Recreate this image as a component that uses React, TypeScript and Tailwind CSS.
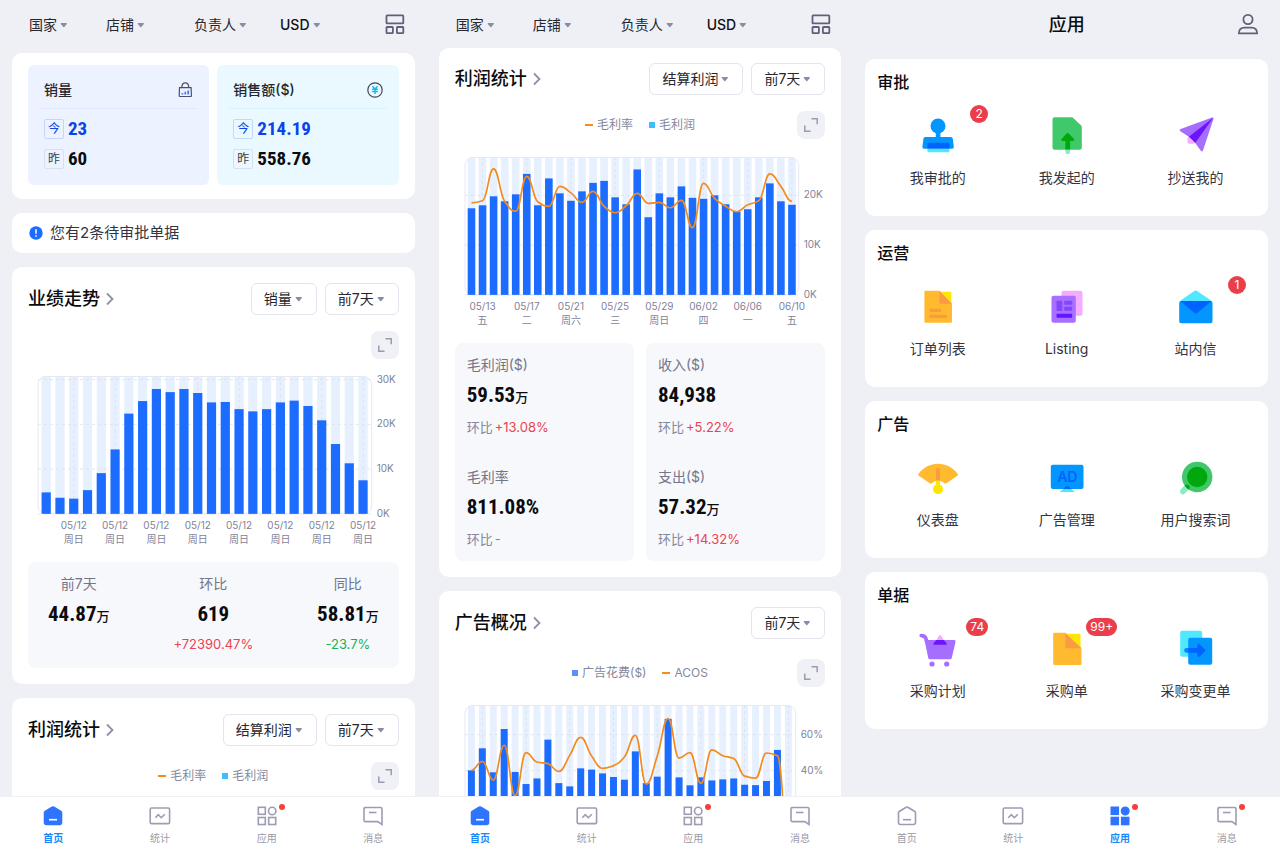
import { ReactNode, useId } from 'react';

type Axis = { value: number; label: string };

const trendBars = [
  4.8, 3.6, 3.4, 5.3, 9.1, 14.4, 22.4, 25.2, 27.9, 27.2, 27.9, 27, 24.9, 25, 23.4, 22.9, 23.4, 24.9, 25.3, 24.1, 20.9,
  15.6, 11.3, 7.5,
];
const trendDays = Array.from({ length: 8 }, () => ['05/12', '周日']);
const trendAxis = [
  { value: 30, label: '30K' },
  { value: 20, label: '20K' },
  { value: 10, label: '10K' },
  { value: 0, label: '0K' },
];

const profitBars = [
  17.4, 18, 19.8, 18.8, 20.2, 24.3, 18, 23.4, 20.4, 18.9, 20.8, 22.5, 22.9, 19.6, 18.2, 25.2, 15.6, 20.4, 19.6, 21.8,
  19.5, 19.3, 20, 18.2, 16.7, 17.2, 19.6, 22.4, 18.8, 18.1,
];
const profitLine = [
  18.5, 18.9, 25.3, 18.8, 16.8, 23.8, 18.7, 17.8, 21.8, 20.5, 18.6, 20.8, 17.8, 16.5, 17.9, 20.4, 18.4, 18.6, 17.5, 19,
  13.5, 22.4, 19.4, 17.8, 16.7, 18.1, 18.9, 24.3, 21.8, 18.8,
];
const profitDays = [
  ['05/13', '五'],
  ['05/17', '二'],
  ['05/21', '周六'],
  ['05/25', '三'],
  ['05/29', '周日'],
  ['06/02', '四'],
  ['06/06', '一'],
  ['06/10', '五'],
];
const profitAxis = [
  { value: 20, label: '20K' },
  { value: 10, label: '10K' },
  { value: 0, label: '0K' },
];

const adBars = [
  40.2, 52.4, 39.1, 63.1, 39.3, 32.6, 35.7, 57.2, 33.1, 31.3, 41.3, 40.6, 38.5, 36.5, 35, 50.7, 33.1, 36.7, 68.7, 36.3,
  31.9, 36.3, 34.6, 35.2, 35.7, 32.2, 32, 34.3, 51.5, 0,
];
const adLine = [
  40.2, 45.2, 34.8, 54.1, 26.1, 50, 44.8, 43.9, 39.6, 48.5, 58.5, 48.1, 41.3, 42.8, 47.6, 59.6, 32.6, 48, 68.9, 47, 50,
  33, 51.5, 48.3, 46.7, 37, 35.9, 49.8, 48.3, 0,
];
const adAxis = [
  { value: 60, label: '60%' },
  { value: 40, label: '40%' },
];

// monotone cubic, so the curve never overshoots its points
function smoothPath(points: number[][]) {
  const slope = (i: number) => (points[i + 1][1] - points[i][1]) / (points[i + 1][0] - points[i][0]);
  const tangent = (i: number) => {
    if (i === 0 || i === points.length - 1) return 0;
    const a = slope(i - 1);
    const b = slope(i);
    return a * b <= 0 ? 0 : (2 * a * b) / (a + b);
  };
  let d = `M${points[0][0]} ${points[0][1]}`;
  for (let i = 0; i < points.length - 1; i++) {
    const [x0, y0] = points[i];
    const [x1, y1] = points[i + 1];
    const h = (x1 - x0) * 0.45;
    d += `C${x0 + h} ${y0 + tangent(i) * h} ${x1 - h} ${y1 - tangent(i + 1) * h} ${x1} ${y1}`;
  }
  return d;
}

interface ChartProps {
  title: string;
  bars: number[];
  line?: number[];
  axis: Axis[];
  days?: string[][];
  max: number;
  first: number; // centre of the first bar
  step: number;
  barWidth: number;
  firstDay: number;
  dayEvery: number;
  right: number;
}

function Chart({ title, bars, line, axis, days, max, first, step, barWidth, firstDay, dayEvery, right }: ChartProps) {
  const clip = useId();
  const left = 10;
  const base = 138;
  const x = (i: number) => first + i * step;
  const y = (v: number) => base - (v / max) * base;
  const marks = bars.map((_, i) => i).filter((i) => i >= firstDay && (i - firstDay) % dayEvery === 0);

  return (
    <svg viewBox="0 0 371 170" className="block h-auto w-full overflow-visible" role="img" aria-label={title}>
      <clipPath id={clip}>
        <rect x={left} y="0" width={right - left} height={base} rx="8" />
      </clipPath>
      <g clipPath={`url(#${clip})`}>
        {bars.map((_, i) => (
          <rect key={i} x={x(i) - barWidth / 2} y="0" width={barWidth} height={base} fill="#e7f0fe" />
        ))}
      </g>
      <g stroke="#dadfec" strokeWidth="0.8" strokeDasharray="3 3">
        {axis.map((a) => (
          <line key={a.label} x1={left} x2={right} y1={y(a.value)} y2={y(a.value)} />
        ))}
        {marks.map((i) => (
          <line key={i} x1={x(i)} x2={x(i)} y1="0" y2={base} />
        ))}
      </g>
      <rect x={left} y="0.5" width={right - left} height={base - 0.5} rx="8" fill="none" stroke="#e6e8f2" />
      {bars.map((v, i) => (
        <rect key={i} x={x(i) - barWidth / 2} y={y(v)} width={barWidth} height={base - y(v)} fill="#1c6dff" />
      ))}
      {line && <path d={smoothPath(line.map((v, i) => [x(i), y(v)]))} fill="none" stroke="#f58b1c" strokeWidth="1.7" />}
      <g fontSize="10" fill="#7f8299">
        {axis.map((a) => (
          <text key={a.label} x={right + 5} y={y(a.value) + 3}>
            {a.label}
          </text>
        ))}
        {days?.map(([date, day], i) => (
          <g key={i} textAnchor="middle">
            <text x={x(marks[i])} y="153">
              {date}
            </text>
            <text x={x(marks[i])} y="167">
              {day}
            </text>
          </g>
        ))}
      </g>
    </svg>
  );
}

function TrendChart() {
  return (
    <Chart
      title="业绩走势"
      bars={trendBars}
      axis={trendAxis}
      days={trendDays}
      max={30.8}
      first={18.2}
      step={13.79}
      barWidth={9.2}
      firstDay={2}
      dayEvery={3}
      right={344}
    />
  );
}

function ProfitChart() {
  return (
    <Chart
      title="利润统计"
      bars={profitBars}
      line={profitLine}
      axis={profitAxis}
      days={profitDays}
      max={27.7}
      first={16.5}
      step={11.06}
      barWidth={7.6}
      firstDay={1}
      dayEvery={4}
      right={344}
    />
  );
}

function AdChart() {
  return (
    <Chart
      title="广告概况"
      bars={adBars}
      line={adLine}
      axis={adAxis}
      max={76.4}
      first={16.4}
      step={10.94}
      barWidth={7}
      firstDay={1}
      dayEvery={4}
      right={341}
    />
  );
}

function Caret() {
  return (
    <svg width="10" height="10" viewBox="0 0 10 10" className="pointer-events-none shrink-0" aria-hidden="true">
      <path d="M2.2 3.1h5.2a.6.6 0 0 1 .45 1L5.3 6.900a.7.7 0 0 1-1 0L1.750 4.100a.6.6 0 0 1 .45-1z" fill="#8a8ca6" />
    </svg>
  );
}

function Dropdown({ label, options, className }: { label: string; options: string[]; className?: string }) {
  return (
    <label className={`flex items-center gap-0.5 text-sm leading-5 ${className ?? ''}`}>
      <select aria-label={label} className="field-sizing-content appearance-none bg-transparent p-0 outline-none">
        {options.map((o) => (
          <option key={o}>{o}</option>
        ))}
      </select>
      <Caret />
    </label>
  );
}

function BoxedDropdown({ label, options }: { label: string; options: string[] }) {
  return (
    <Dropdown
      label={label}
      options={options}
      className="h-8 rounded-md border border-[#e3e4ee] bg-white px-3 text-[#26262e]"
    />
  );
}

function FilterBar() {
  return (
    <header className="flex h-12 shrink-0 items-center pt-0.5 pr-[20px] pl-[29px] text-[#26262e]">
      <Dropdown label="国家" options={['国家']} />
      <Dropdown label="店铺" options={['店铺']} className="ml-[37px]" />
      <Dropdown label="负责人" options={['负责人']} className="ml-[48px]" />
      <Dropdown label="币种" options={['USD', 'CNY']} className="ml-[32px] font-medium text-[#111]" />
      <button aria-label="布局" className="ml-auto">
        <svg width="24" height="24" viewBox="0 0 24 24" fill="none" stroke="#625f7a" strokeWidth="1.800">
          <rect x="3.500" y="2.400" width="16.800" height="8" rx="0.6" />
          <rect x="3.500" y="14" width="6.400" height="6.100" rx="0.6" />
          <rect x="13.900" y="14" width="6.400" height="6.100" rx="0.6" />
        </svg>
      </button>
    </header>
  );
}

function BagIcon() {
  return (
    <svg width="16" height="16" viewBox="0 0 16 16" fill="none" aria-hidden="true">
      <path d="M2.500 5.600h11.600l.3 8.400a.5.5 0 0 1-.5.5H2.700a.5.5 0 0 1-.5-.5zM4.800 5.400c.2-6 6.800-6 7 0" stroke="#4c4f69" strokeWidth="1.200" />
      <path d="M5.400 12.600v-1.700M8.300 12.600V9.700M11.200 12.600V8.500" stroke="#3c7dff" strokeWidth="1.700" />
    </svg>
  );
}

function CoinIcon() {
  return (
    <svg width="16" height="16" viewBox="0 0 16 16" fill="none" aria-hidden="true">
      <circle cx="8" cy="8" r="7.2" stroke="#43465c" strokeWidth="1.2" />
      <path d="M5.4 4.2 8 7l2.600-2.800M5.200 7.300h5.600M5.200 9.500h5.600M8 7v5" stroke="#19b5ee" strokeWidth="1.400" />
    </svg>
  );
}

function Figure({ children, className }: { children: ReactNode; className: string }) {
  return <strong className={`font-['Roboto_Condensed',Roboto,sans-serif] leading-6 font-bold ${className}`}>{children}</strong>;
}

function BigFigure({ value, unit }: { value: string; unit?: string }) {
  return (
    <div className="flex h-6 items-baseline text-[#0b0b0e]">
      <Figure className="text-[21px]">{value}</Figure>
      {unit && <span className="text-[13px] leading-6 font-medium">{unit}</span>}
    </div>
  );
}

interface SalesTileProps {
  title: string;
  icon: ReactNode;
  today: string;
  yesterday: string;
  tone: string;
  rule: string;
}

function SalesTile({ title, icon, today, yesterday, tone, rule }: SalesTileProps) {
  return (
    <section className={`flex-1 rounded-md px-3 pb-4 ${tone}`}>
      <div className={`flex h-11 items-center justify-between border-b px-1 pt-1.5 ${rule}`}>
        <h2 className="text-sm leading-5 font-medium text-[#26262e]">{title}</h2>
        {icon}
      </div>
      <div className="flex flex-col gap-2.5 px-1 pt-2.5">
        <div className="flex h-5 items-center gap-1 text-[#0a43ea]">
          <span className="flex size-5 items-center justify-center rounded-xs border border-[#c3d7fb] text-[12px]">今</span>
          <Figure className="text-[19px]">{today}</Figure>
        </div>
        <div className="flex h-5 items-center gap-1 text-[#0b0b0e]">
          <span className="flex size-5 items-center justify-center rounded-xs border border-[#d9e0ec] text-[12px] text-[#3a3c48]">
            昨
          </span>
          <Figure className="text-[19px]">{yesterday}</Figure>
        </div>
      </div>
    </section>
  );
}

function Card({ children, className }: { children: ReactNode; className?: string }) {
  return <section className={`rounded-[10px] bg-white ${className ?? ''}`}>{children}</section>;
}

function CardHeader({ title, metric }: { title: string; metric?: string }) {
  return (
    <div className="flex h-8 items-center gap-2">
      <a href="#detail" className="mr-auto flex items-center gap-1.5 text-[18px] leading-7 font-medium text-[#0b0b0e]">
        <h2>{title}</h2>
        <svg width="8" height="14" viewBox="0 0 8 14" fill="none" aria-hidden="true">
          <path d="m1 1.500 5.500 5.500L1 12.500" stroke="#8f90a8" strokeWidth="1.800" />
        </svg>
      </a>
      {metric && <BoxedDropdown label="指标" options={[metric]} />}
      <BoxedDropdown label="时间范围" options={['前7天', '前30天']} />
    </div>
  );
}

function LegendRow({ children }: { children?: ReactNode }) {
  return (
    <div className="grid grid-cols-[1fr_auto_1fr] items-center">
      <span />
      <div className="flex gap-4 text-[12px] leading-5 text-[#85879b]">{children}</div>
      <button aria-label="全屏" className="flex size-7 items-center justify-center justify-self-end rounded-lg bg-[#f0f1f7]">
        <svg width="16" height="16" viewBox="0 0 16 16" fill="none" stroke="#9a9bb2" strokeWidth="1.500">
          <path d="M8.500 1.800h5.700v5.500M1.800 8.500v5.700h5.700" />
        </svg>
      </button>
    </div>
  );
}

function LegendItem({ mark, children }: { mark: string; children: ReactNode }) {
  return (
    <span className="flex items-center gap-1">
      <i className={mark} />
      {children}
    </span>
  );
}

function ProfitLegend() {
  return (
    <LegendRow>
      <LegendItem mark="h-0.5 w-2 bg-[#f58b1c]">毛利率</LegendItem>
      <LegendItem mark="size-1.5 bg-[#40bcff]">毛利润</LegendItem>
    </LegendRow>
  );
}

const tabs = ['首页', '统计', '应用', '消息'];

function TabIcon({ name, active }: { name: string; active: boolean }) {
  const paint = active ? '#2f74ff' : 'none';
  const stroke = active ? '#2f74ff' : '#9c9db3';
  return (
    <svg width="24" height="24" viewBox="0 0 24 24" fill={paint} stroke={stroke} strokeWidth="1.600" aria-hidden="true">
      {name === '首页' && (
        <>
          <path d="M11.200 3.300a1.500 1.500 0 0 1 1.600 0l7 4.200c.5.300.7.700.7 1.200v9.800a2 2 0 0 1-2 2h-13a2 2 0 0 1-2-2V8.700c0-.5.200-.9.700-1.200z" />
          <path d="M8 15.700h8" stroke={active ? '#fff' : '#9c9db3'} />
        </>
      )}
      {name === '统计' && (
        <>
          <rect x="2.200" y="4" width="19.400" height="15.600" rx="1.400" />
          <path d="m7.300 13.700 3-3.100 3 3.100 3.500-3.500" />
        </>
      )}
      {name === '应用' && (
        <>
          <rect x="3.300" y="3.300" width="7" height="7" />
          <circle cx="17.200" cy="7" r="3.700" />
          <rect x="3.300" y="13.500" width="7" height="7" />
          <rect x="13.700" y="13.500" width="7" height="7" />
        </>
      )}
      {name === '消息' && (
        <>
          <path d="M4 3.500h15.500a1.500 1.500 0 0 1 1.500 1.500v15.500l-4.200-2.900H4a1 1 0 0 1-1-1v-12a1 1 0 0 1 1-1z" />
          <path d="M8 8.500h7.500" />
        </>
      )}
    </svg>
  );
}

function TabBar({ current, dots }: { current: string; dots: string[] }) {
  return (
    <nav className="grid shrink-0 grid-cols-4 border-t border-[#f0f0f5] bg-white pt-[7px] pb-4">
      {tabs.map((tab) => (
        <a
          key={tab}
          href={`#${tab}`}
          className={`flex flex-col items-center gap-0.5 text-[10px] leading-4 ${
            tab === current ? 'font-bold text-[#1989fa]' : 'text-[#9a9aa5]'
          }`}
        >
          <span className="relative">
            <TabIcon name={tab} active={tab === current} />
            {dots.includes(tab) && <i className="absolute top-0 -right-1.5 size-1.5 rounded-full bg-[#fa3e3e]" />}
          </span>
          {tab}
        </a>
      ))}
    </nav>
  );
}

function Screen({ header, children, tabBar }: { header: ReactNode; children: ReactNode; tabBar: ReactNode }) {
  return (
    <div className="flex h-screen min-w-0 flex-col bg-[#eff0f6]">
      {header}
      <main className="min-h-0 flex-1 overflow-y-auto px-3 [scrollbar-width:none]">{children}</main>
      {tabBar}
    </div>
  );
}

function HomeScreen() {
  return (
    <Screen header={<FilterBar />} tabBar={<TabBar current="首页" dots={['应用']} />}>
      <div className="flex flex-col gap-3.5 pt-[5px]">
        <Card className="flex gap-2 px-4 pt-3 pb-3.5">
          <SalesTile title="销量" icon={<BagIcon />} today="23" yesterday="60" tone="bg-[#ecf2ff]" rule="border-[#e0e8fd]" />
          <SalesTile title="销售额($)" icon={<CoinIcon />} today="214.19" yesterday="558.76" tone="bg-[#e9f9ff]" rule="border-[#d8f3fd]" />
        </Card>

        <Card className="flex h-10 items-center gap-[7px] px-4 text-[15px] text-[#33343f]">
          <svg width="14" height="14" viewBox="0 0 14 14" className="ml-px" aria-hidden="true">
            <circle cx="7" cy="7" r="6.700" fill="#1c6dff" />
            <path d="M7 3.200v4.600M7 9.300v1.500" stroke="#fff" strokeWidth="1.500" />
          </svg>
          您有2条待审批单据
        </Card>

        <Card className="p-4">
          <CardHeader title="业绩走势" metric="销量" />
          <div className="mt-4 mb-[17px]">
            <LegendRow />
          </div>
          <TrendChart />
          <div className="mt-4 flex justify-between rounded-lg bg-[#f7f8fc] px-5 pt-3 pb-3.5 text-[13px] leading-5">
            <div className="flex flex-col items-center gap-2">
              <span className="text-sm leading-5 text-[#737589]">前7天</span>
              <BigFigure value="44.87" unit="万" />
            </div>
            <div className="flex flex-col items-center gap-2">
              <span className="text-sm leading-5 text-[#737589]">环比</span>
              <BigFigure value="619" />
              <span className="text-[#ec4350]">+72390.47%</span>
            </div>
            <div className="flex flex-col items-center gap-2">
              <span className="text-sm leading-5 text-[#737589]">同比</span>
              <BigFigure value="58.81" unit="万" />
              <span className="text-[#1cb04d]">-23.7%</span>
            </div>
          </div>
        </Card>

        <Card className="p-4 pb-10">
          <CardHeader title="利润统计" metric="结算利润" />
          <div className="mt-4">
            <ProfitLegend />
          </div>
        </Card>
      </div>
    </Screen>
  );
}

function Stat({ label, value, unit, change }: { label: string; value: string; unit?: string; change?: string }) {
  return (
    <div>
      <div className="text-sm leading-5 text-[#737589]">{label}</div>
      <div className="mt-2 mb-2.5">
        <BigFigure value={value} unit={unit} />
      </div>
      <div className="flex gap-0.5 text-[13px] leading-5 text-[#85879b]">
        环比 {change ? <span className="text-[#ec4350]">{change}</span> : <span>-</span>}
      </div>
    </div>
  );
}

function StatsScreen() {
  return (
    <Screen header={<FilterBar />} tabBar={<TabBar current="首页" dots={['应用']} />}>
      <div className="flex flex-col gap-3.5">
        <Card className="px-4 pt-[15px] pb-4">
          <CardHeader title="利润统计" metric="结算利润" />
          <div className="mt-4 mb-[18px]">
            <ProfitLegend />
          </div>
          <ProfitChart />
          <div className="mt-4 grid grid-cols-2 gap-3">
            <div className="flex flex-col gap-[30px] rounded-lg bg-[#f7f8fc] p-3">
              <Stat label="毛利润($)" value="59.53" unit="万" change="+13.08%" />
              <Stat label="毛利率" value="811.08%" />
            </div>
            <div className="flex flex-col gap-[30px] rounded-lg bg-[#f7f8fc] p-3">
              <Stat label="收入($)" value="84,938" change="+5.22%" />
              <Stat label="支出($)" value="57.32" unit="万" change="+14.32%" />
            </div>
          </div>
        </Card>

        <Card className="p-4">
          <CardHeader title="广告概况" />
          <div className="mt-5 mb-[18px]">
            <LegendRow>
              <LegendItem mark="size-1.5 bg-[#5b8ff9]">广告花费($)</LegendItem>
              <LegendItem mark="h-0.5 w-2 bg-[#f58b1c]">ACOS</LegendItem>
            </LegendRow>
          </div>
          <AdChart />
        </Card>
      </div>
    </Screen>
  );
}

interface AppEntry {
  name: string;
  badge?: string;
  icon: ReactNode;
}

const groups: { title: string; apps: AppEntry[] }[] = [
  {
    title: '审批',
    apps: [
      {
        name: '我审批的',
        badge: '2',
        icon: (
          <>
            <circle cx="20" cy="11" r="7.500" fill="#0396ff" />
            <path d="M17.800 16h4.600v6h10.400a2 2 0 0 1 2 1.700l1 8.200a1.600 1.600 0 0 1-1.600 1.800H6a1.600 1.600 0 0 1-1.600-1.800l1-8.200a2 2 0 0 1 2-1.700h10.400z" fill="#0396ff" />
            <path d="M9.400 29a1.300 1.300 0 0 1 1.300-1.300h19.400a1.300 1.300 0 0 1 1.300 1.300v4.700h-22z" fill="#0062ff" />
            <path d="M9.400 33.700h22V36a1.300 1.300 0 0 1-1.300 1.300H10.700A1.300 1.300 0 0 1 9.400 36z" fill="#4fe8ff" />
          </>
        ),
      },
      {
        name: '我发起的',
        icon: (
          <>
            <path d="M7.500 2.300h17.300a2 2 0 0 1 1.400.6l8 7.600a2 2 0 0 1 .6 1.400v20.800a2 2 0 0 1-2 2H7.500a2 2 0 0 1-2-2V4.300a2 2 0 0 1 2-2z" fill="#3fc96b" />
            <path d="M19.500 18.600a1.600 1.600 0 0 1 2.400 0l5 5.300c.8.900.3 2-.8 2h-3v8.800h-4.700v-8.800h-3c-1.100 0-1.600-1.100-.8-2z" fill="#00a80d" />
            <path d="M18.400 34.700h4.700V37a2.350 2.350 0 0 1-4.700 0z" fill="#86edc4" />
          </>
        ),
      },
      {
        name: '抄送我的',
        icon: (
          <>
            <path d="M36 2.500c1-.3 1.700.4 1.400 1.500L27 35.500c-.4 1.200-1.800 1.200-2.400.1L19.200 28l-6.400-6.300-8.400-5.500c-1-.7-.9-1.900.3-2.300z" fill="#a66eff" />
            <path d="M37.200 2.800 19.200 28l-6.400-6.300z" fill="#6d14ff" />
            <path d="m12.800 21.700 6 6a2 2 0 0 1-1.300 1h-4a2 2 0 0 1-2-2v-3a2 2 0 0 1 1.300-2z" fill="#f5a9ff" />
          </>
        ),
      },
    ],
  },
  {
    title: '运营',
    apps: [
      {
        name: '订单列表',
        icon: (
          <>
            <path d="M7.700 4.700h13.700L34 17.700v17.700a1.300 1.300 0 0 1-1.300 1.300h-25a1.300 1.300 0 0 1-1.300-1.300V6a1.300 1.300 0 0 1 1.300-1.300z" fill="#ffba30" />
            <path d="M22.400 5.700h9.700a1.300 1.300 0 0 1 1.300 1.300v10.100z" fill="#ffe600" />
            <path d="M21.400 4.700 34 17.700H22.700a1.300 1.300 0 0 1-1.300-1.300z" fill="#fa9b42" />
            <rect x="11.400" y="22.700" width="11.700" height="3.300" rx="1" fill="#fa9b42" />
            <rect x="11.400" y="28.700" width="17.600" height="3.300" rx="1" fill="#fa9b42" />
          </>
        ),
      },
      {
        name: 'Listing',
        icon: (
          <>
            <rect x="14.500" y="4.700" width="21" height="25" rx="2" fill="#f3acff" />
            <rect x="4.500" y="9.700" width="24.300" height="27" rx="2" fill="#a870ff" />
            <rect x="9.500" y="14.700" width="5.700" height="10.300" rx="0.800" fill="#8345ff" />
            <rect x="17.200" y="14.700" width="8" height="4" rx="0.800" fill="#8345ff" />
            <rect x="17.200" y="20.700" width="8" height="4" rx="0.800" fill="#8345ff" />
            <rect x="9.500" y="27.700" width="15.700" height="4" rx="0.800" fill="#6414ff" />
          </>
        ),
      },
      {
        name: '站内信',
        badge: '1',
        icon: (
          <>
            <path d="M3.800 15 18.700 4.800a1.700 1.700 0 0 1 2 0L35.800 15z" fill="#4fe8ff" />
            <path d="M5.200 15h29.300a2 2 0 0 1 2 2v18.300a2 2 0 0 1-2 2H5.200a2 2 0 0 1-2-2V17a2 2 0 0 1 2-2z" fill="#0396ff" />
            <path d="M4.300 15h31.300L20.800 27.200a1.700 1.700 0 0 1-2.100 0z" fill="#0062ff" />
          </>
        ),
      },
    ],
  },
  {
    title: '广告',
    apps: [
      {
        name: '仪表盘',
        icon: (
          <>
            <path d="M.8 16.500C5.500 10.300 12.300 6.700 20 6.700s14.700 3.600 19.400 9.800c.8 1 .6 1.800-.4 2.500L28.400 26.300c-.8.500-1.500.4-2.200-.2-3.700-3-8.500-3-12.200 0-.7.600-1.400.7-2.200.2L1.200 19c-1-.7-1.200-1.500-.4-2.500z" fill="#ffba30" />
            <path d="M18 13a2 2 0 0 1 4 0v10.700h-4z" fill="#fa9b42" />
            <path d="M18 23.500h4v4a5 5 0 1 1-4 0z" fill="#ffe600" />
          </>
        ),
      },
      {
        name: '广告管理',
        icon: (
          <>
            <rect x="3.800" y="7.700" width="32.700" height="24.300" rx="2" fill="#0396ff" />
            <path d="m16.300 32 2.700-2.400a2 2 0 0 1 2.500 0l2.800 2.400z" fill="#0062ff" />
            <path d="M16.300 32h8l3 2.200c.5.400.2.800-.4.800H13.700c-.6 0-.9-.4-.4-.8z" fill="#4fe8ff" />
            <text x="20.300" y="24.700" textAnchor="middle" fontSize="14" fontWeight="600" fill="#0062ff">
              AD
            </text>
          </>
        ),
      },
      {
        name: '用户搜索词',
        icon: (
          <>
            <path d="m11.500 29.500-4.700 5" stroke="#86edc4" strokeWidth="5.500" strokeLinecap="round" />
            <circle cx="21.200" cy="20" r="15.200" fill="#40c76a" />
            <circle cx="21.200" cy="20" r="10.200" fill="#00a80d" />
            <path d="M8.800 28.700a2.800 2.800 0 0 1 5 1.400c0 1-.4 1.700-1 2.400a15 15 0 0 1-4-3.800z" fill="#00a80d" />
          </>
        ),
      },
    ],
  },
  {
    title: '单据',
    apps: [
      {
        name: '采购计划',
        badge: '74',
        icon: (
          <>
            <path d="M3.200 7.600c3 0 4.300.9 4.900 3.400l.7 3" stroke="#a66eff" strokeWidth="3.600" strokeLinecap="round" fill="none" />
            <path d="M6.500 12H36a1.500 1.500 0 0 1 1.500 1.900l-3.700 15.800a2 2 0 0 1-2 1.600h-19.600a2 2 0 0 1-2-1.600z" fill="#a66eff" />
            <circle cx="14" cy="36" r="2.600" fill="#a66eff" />
            <circle cx="28.700" cy="36" r="2.600" fill="#a66eff" />
            <path d="m18.500 12 2.500-4.500a1.200 1.200 0 0 1 2.100 0l2.600 4.500z" fill="#f3acff" />
            <path d="M18.500 12h7.200l2.900 3.300c.5.700.1 1.400-.6 1.400H16.200c-.7 0-1.100-.7-.6-1.400z" fill="#6d14ff" />
          </>
        ),
      },
      {
        name: '采购单',
        badge: '99+',
        icon: (
          <>
            <path d="M7.500 4.700h10.700l16.300 15.600v15.400a1.300 1.300 0 0 1-1.300 1.300H7.500a1.300 1.300 0 0 1-1.300-1.300V6a1.300 1.300 0 0 1 1.300-1.300z" fill="#ffba30" />
            <path d="M19.200 5.700h13a1.300 1.300 0 0 1 1.300 1.300v12.400z" fill="#ffe600" />
            <path d="m18.200 4.700 16.300 15.600h-15a1.300 1.300 0 0 1-1.300-1.300z" fill="#fa9b42" />
          </>
        ),
      },
      {
        name: '采购变更单',
        icon: (
          <>
            <rect x="4.200" y="2.700" width="22" height="26" rx="2" fill="#4fe8ff" />
            <rect x="12.200" y="9.700" width="24" height="27" rx="2" fill="#0396ff" />
            <path d="M10.500 20h1.700v4.700h-1.700a2.350 2.350 0 0 1 0-4.700z" fill="#0389ff" />
            <path d="M12.200 20h9.300v-2.800c0-1.400 1-1.900 2-1l5.300 5c.8.700.8 1.500 0 2.200l-5.300 5c-1 .9-2 .4-2-1v-2.700h-9.300z" fill="#0062ff" />
          </>
        ),
      },
    ],
  },
];

function AppsScreen() {
  const header = (
    <header className="grid h-12 shrink-0 grid-cols-[1fr_auto_1fr] items-center px-5 pt-0.5">
      <span />
      <h1 className="text-[18px] leading-7 font-medium text-[#0b0b0e]">应用</h1>
      <button aria-label="个人中心" className="justify-self-end">
        <svg width="24" height="24" viewBox="0 0 24 24" fill="none" stroke="#625f7a" strokeWidth="1.800">
          <circle cx="12" cy="6.500" r="4.600" />
          <path d="M2.900 20.300c0-3.800 2.300-5.700 5.600-5.700h7c3.300 0 5.600 1.900 5.600 5.700z" />
        </svg>
      </button>
    </header>
  );

  return (
    <Screen header={header} tabBar={<TabBar current="应用" dots={['应用', '消息']} />}>
      <div className="flex flex-col gap-3.5 pt-[11px]">
        {groups.map((group) => (
          <Card key={group.title} className="px-2 pt-3 pb-7">
            <h2 className="px-1 text-[16px] leading-[22px] font-medium text-[#0b0b0e]">{group.title}</h2>
            <div className="grid grid-cols-3">
              {group.apps.map((app) => (
                <a
                  key={app.name}
                  href={`#${app.name}`}
                  className="relative flex flex-col items-center gap-[13px] pt-[22px] text-sm leading-5 text-[#33343f]"
                >
                  <svg width="40" height="40" viewBox="0 0 40 40" aria-hidden="true">
                    {app.icon}
                  </svg>
                  {app.name}
                  {app.badge && (
                    <span className="absolute top-3 right-3.5 h-[18px] min-w-[18px] rounded-full bg-[#ea3f4b] px-1 text-center text-[12px] leading-[18px] text-white">
                      {app.badge}
                    </span>
                  )}
                </a>
              ))}
            </div>
          </Card>
        ))}
      </div>
    </Screen>
  );
}

export default function App() {
  return (
    <div className="grid grid-cols-3 overflow-hidden font-[Inter,'Noto_Sans_CJK_SC',sans-serif]">
      <HomeScreen />
      <StatsScreen />
      <AppsScreen />
    </div>
  );
}
